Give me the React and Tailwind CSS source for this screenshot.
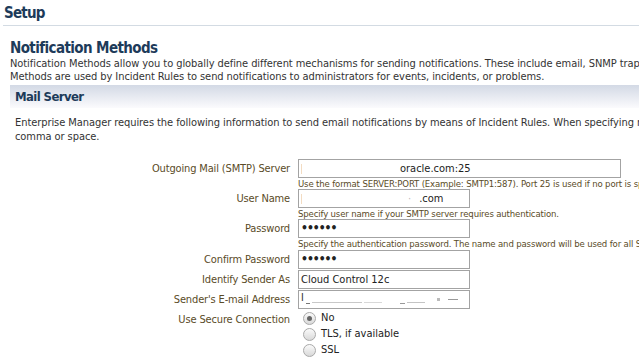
import React from "react";

const label = "text-right text-[#5a4b27] text-[11px] tracking-[-0.15px] leading-[19px] whitespace-nowrap";
const hint = "text-[#5a4b27] text-[9.5px] tracking-[-0.15px] leading-[11px] h-[11px] whitespace-nowrap";
const input = "h-[19px] border border-[#a3a3a3] bg-white text-[11px] text-[#222] leading-[17px] pl-[2px] whitespace-nowrap overflow-hidden";

function Radio({ checked, text }) {
  return (
    <div className="flex items-center h-[16px] ml-[5px]">
      <div className="w-[13px] h-[13px] rounded-full border border-[#a9a9a9] bg-gradient-to-b from-[#fafafa] to-[#d9d9d9] flex items-center justify-center">
        {checked && <div className="w-[5px] h-[5px] rounded-full bg-[#666]" />}
      </div>
      <span className="ml-[5px] text-[11px] text-[#222] leading-[16px]">{text}</span>
    </div>
  );
}

export default function App() {
  return (
    <div className="w-[639px] h-[363px] overflow-hidden bg-white font-['DejaVu_Sans_Condensed','Liberation_Sans',sans-serif]">
      <div className="ml-[3px] h-[26px] border-b border-[#d3dbe3] pt-[4px] pl-[1px]">
        <div className="text-[15px] leading-[18px] font-bold tracking-[-0.8px] text-[#1d3b5a]">Setup</div>
      </div>
      <div className="pl-[10px] mt-[13px]">
        <div className="text-[15px] leading-[18px] font-bold tracking-[-0.6px] text-[#1d3b5a] whitespace-nowrap">Notification Methods</div>
        <div className="text-[11px] leading-[13px] tracking-[-0.07px] text-[#333] whitespace-nowrap">
          <div>Notification Methods allow you to globally define different mechanisms for sending notifications. These include email, SNMP traps</div>
          <div>Methods are used by Incident Rules to send notifications to administrators for events, incidents, or problems.</div>
        </div>
        <div className="mt-[2px] h-[23px] bg-gradient-to-b from-[#d3d9e5] to-[#fbfbfd] pl-[5px] flex items-center">
          <span className="text-[13px] font-bold tracking-[-0.6px] text-[#1d3b5a] leading-[16px]">Mail Server</span>
        </div>
        <div className="mt-[8px] pl-[5px] text-[11px] leading-[14px] tracking-[-0.07px] text-[#333] whitespace-nowrap">
          <div>Enterprise Manager requires the following information to send email notifications by means of Incident Rules. When specifying multiple</div>
          <div>comma or space.</div>
        </div>
      </div>

      <div className="mt-[15px] grid grid-cols-[290px_1fr] gap-x-[8px]">
        <div className={label}>Outgoing Mail (SMTP) Server</div>
        <div className={input + " w-[323px] flex items-center"}>
          <span className="w-[1px] h-[10px] bg-[#f3dcc2]" />
          <span className="ml-[98px]">oracle.com:25</span>
        </div>
        <div />
        <div className={hint}>Use the format SERVER:PORT (Example: SMTP1:587). Port 25 is used if no port is specified.</div>

        <div className={label}>User Name</div>
        <div className={input + " w-[172px] flex items-center"}>
          <span className="w-[1px] h-[10px] bg-[#f3dcc2]" />
          <span className="ml-[106px] text-[#bbb]">·</span>
          <span className="ml-[8px]">.com</span>
        </div>
        <div />
        <div className={hint}>Specify user name if your SMTP server requires authentication.</div>

        <div className={label}>Password</div>
        <div className={input + " w-[172px] font-bold tracking-[-1px] text-[12px]"}>••••••</div>
        <div />
        <div className={hint + " h-[12px]"}>Specify the authentication password. The name and password will be used for all SMTP servers.</div>

        <div className={label}>Confirm Password</div>
        <div className={input + " w-[172px] font-bold tracking-[-1px] text-[12px]"}>••••••</div>

        <div className={label + " mt-[1px]"}>Identify Sender As</div>
        <div className={input + " w-[172px] mt-[1px]"}>Cloud Control 12c</div>

        <div className={label + " mt-[1px]"}>Sender's E-mail Address</div>
        <div className={input + " w-[172px] mt-[1px] flex items-end pb-[4px] gap-[2px]"}>
          <span className="leading-[12px]">l</span>
          <span className="w-[4px] h-[1px] bg-[#777]" />
          <span className="w-[50px] h-[1px] bg-[#c8c8c8] mb-[1px]" />
          <span className="w-[18px] h-[1px] bg-[#d8d8d8] mb-[1px]" />
          <span className="ml-[16px] w-[5px] h-[1px] bg-[#999]" />
          <span className="w-[18px] h-[1px] bg-[#c4c4c4] mb-[1px]" />
          <span className="ml-[10px] w-[3px] h-[3px] bg-[#bbb] mb-[3px]" />
          <span className="ml-[6px] w-[10px] h-[1px] bg-[#999] mb-[4px]" />
        </div>

        <div className={label + " mt-[1px] leading-[16px]"}>Use Secure Connection</div>
        <div className="mt-[1px]">
          <Radio checked text="No" />
          <Radio text="TLS, if available" />
          <Radio text="SSL" />
        </div>
      </div>
    </div>
  );
}
